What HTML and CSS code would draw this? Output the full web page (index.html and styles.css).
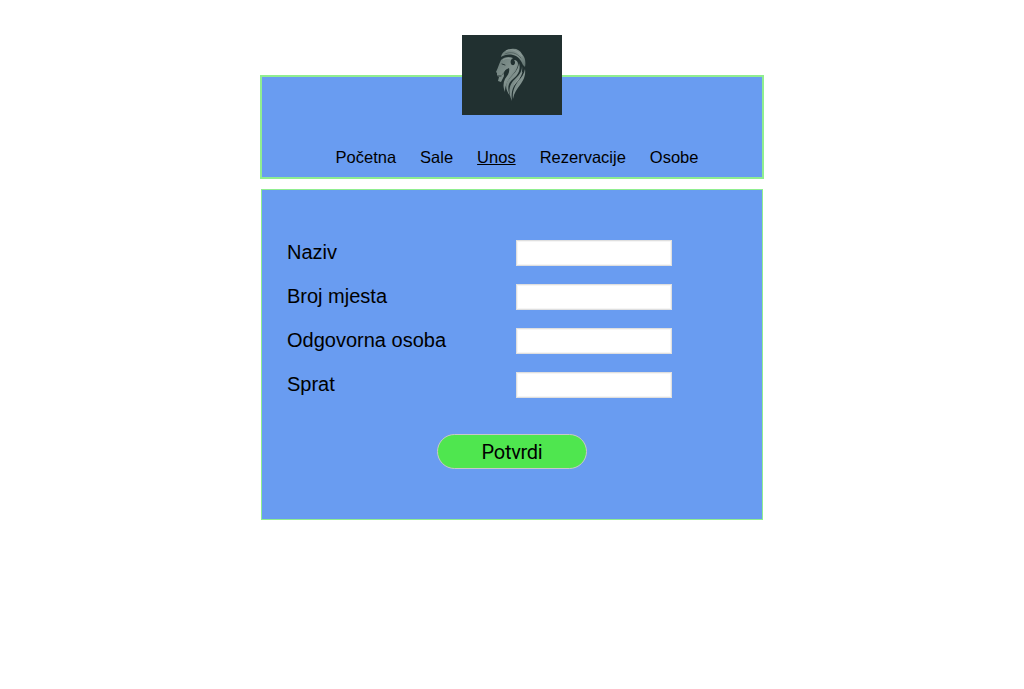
FILE: index.html
```html
<!DOCTYPE html>
<html lang="bs">
<head>
<meta charset="utf-8">
<title>Unos</title>
<link rel="stylesheet" href="styles.css">
</head>
<body>
<header class="header">
  <svg class="logo" viewBox="0 0 100 80" aria-label="Logo">
    <defs>
      <linearGradient id="fur" x1="0" y1="0" x2="1" y2="1">
        <stop offset="0" stop-color="#6b7c79"/>
        <stop offset=".55" stop-color="#83938f"/>
        <stop offset="1" stop-color="#5d6f6c"/>
      </linearGradient>
    </defs>
    <rect width="100" height="80" fill="#213030"/>
    <g fill="url(#fur)">
      <path d="M39 22C40 17 45 14 49 14C54 13 58 15 60 19C63 22 64 27 63 32L61 30C59 25 56 21 51 20C46 19 42 20 39 22Z"/>
      <path d="M39 25C42 22 47 21 51 23C48 25 48 28 50 30C53 31 54 27 52 25C56 25 57 29 55 33C53 39 47 42 45 48C43 52 43 54 43 57C41 52 41 48 43 44C46 40 48 37 47 33C44 34 41 37 42 41L39 47L36 46L37 42L35 41L35 38L34 37C36 33 37 29 39 25Z"/>
      <path d="M57 28C59 35 56 40 51 44C46 48 45 53 48 61C43 54 43 49 47 44C51 39 56 36 57 28Z"/>
      <path d="M60 31C61 38 58 44 54 48C50 53 49 59 50 66C46 57 47 51 51 46C56 41 60 38 60 31Z"/>
      <path d="M63 34C64 41 61 46 58 50C55 54 52 58 51 64C50 56 53 51 56 46C60 42 62 39 63 34Z"/>
    </g>
    <g fill="none" stroke="#213030" stroke-linecap="round">
      <path stroke-width=".9" d="M40 29L43 30M35 41L39 41"/>
      <path stroke-width=".6" opacity=".7" d="M43 19C49 16 55 18 59 23M44 35C42 37 41 39 40 40"/>
    </g>
    <path fill="none" stroke="#95a29f" stroke-width=".7" d="M44 16C50 13 56 16 60 21M41 25C43 23 47 23 49 24M60 37C59 42 55 46 52 50"/>
  </svg>
  <nav class="nav">
    <a>Početna</a><a>Sale</a><a class="active">Unos</a><a>Rezervacije</a><a>Osobe</a>
  </nav>
</header>
<form class="card">
  <div class="fields">
    <label for="naziv">Naziv</label><input id="naziv">
    <label for="broj">Broj mjesta</label><input id="broj">
    <label for="osoba">Odgovorna osoba</label><input id="osoba">
    <label for="sprat">Sprat</label><input id="sprat">
  </div>
  <button class="submit" type="button">Potvrdi</button>
</form>
</body>
</html>
```
FILE: styles.css
```css
* { box-sizing: border-box; }
body {
  margin: 0;
  padding-top: 75px;
  background: #fff;
  color: #000;
  font-family: "Liberation Sans", Arial, sans-serif;
}
.header {
  display: flex;
  flex-direction: column;
  align-items: center;
  width: 504px;
  height: 104px;
  margin: 0 auto 10px;
  border: 2px solid #90ee90;
  background: #699cf1;
}
.logo {
  display: block;
  flex: none;
  width: 100px;
  height: 80px;
  margin-top: -42px;
}
.nav {
  display: flex;
  gap: 24px;
  margin: 32px 0 0 10px;
  font-size: 16.5px;
  line-height: 20px;
}
.active { text-decoration: underline; }
.card {
  display: flex;
  flex-direction: column;
  align-items: center;
  width: 502px;
  height: 331px;
  margin: 0 auto;
  padding-top: 50px;
  border: 1px solid #90ee90;
  background: #699cf1;
}
.fields {
  display: grid;
  grid-template-columns: 229px 156px;
  grid-auto-rows: 26px;
  row-gap: 18px;
  align-self: flex-start;
  margin-left: 25px;
  font-size: 20px;
  line-height: 25px;
}
.fields input {
  width: 156px;
  height: 26px;
  padding: 1px 4px;
  border: 1px solid #dfdfdf;
  background: #fff;
  box-shadow: inset 0 0 0 1px #f5f5f5;
}
.submit {
  width: 150px;
  height: 35px;
  margin-top: 36px;
  padding: 1px 0 0;
  border: 1px solid #c8c8c8;
  border-radius: 18px;
  background: #4fe64f;
  color: #000;
  font: 20px/32px Roboto, sans-serif;
  letter-spacing: -0.3px;
}
```
